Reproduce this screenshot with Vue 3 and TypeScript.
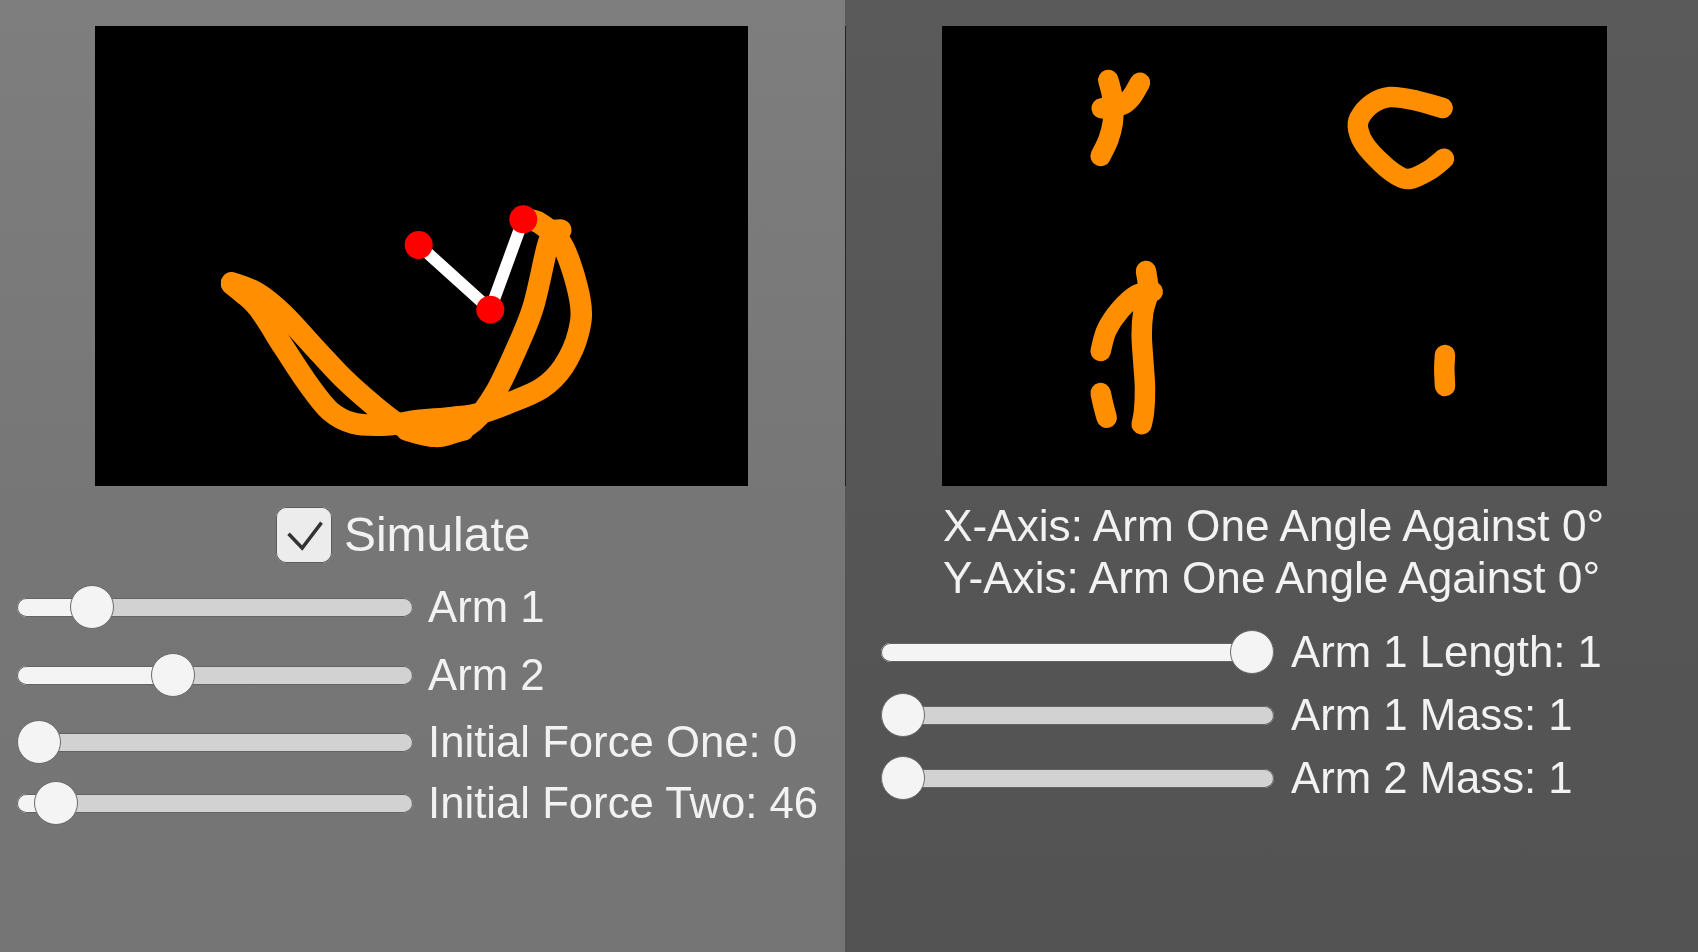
<script setup lang="ts">
type Pt = [number, number]
interface SliderRow { label: string; value: number; cls: string }

function smooth(pts: Pt[]): string {
  let d = `M${pts[0][0]} ${pts[0][1]}`
  for (let i = 0; i < pts.length - 1; i++) {
    const a = pts[Math.max(i - 1, 0)]
    const b = pts[i]
    const c = pts[i + 1]
    const e = pts[Math.min(i + 2, pts.length - 1)]
    const c1x = b[0] + (c[0] - a[0]) / 6
    const c1y = b[1] + (c[1] - a[1]) / 6
    const c2x = c[0] - (e[0] - b[0]) / 6
    const c2y = c[1] - (e[1] - b[1]) / 6
    d += ` C${c1x.toFixed(1)} ${c1y.toFixed(1)} ${c2x.toFixed(1)} ${c2y.toFixed(1)} ${c[0].toFixed(1)} ${c[1].toFixed(1)}`
  }
  return d
}

function trace(ox: number, oy: number, pts: Pt[]): string {
  return smooth(pts.map(([x, y]): Pt => [ox + x / 3, oy + y / 3]))
}

const leftTrace: string[] = [
  trace(200, 190, [
    [95, 278], [170, 308], [250, 372], [350, 480], [430, 565], [520, 645], [600, 705],
    [680, 735], [740, 735], [820, 695], [885, 610], [950, 475], [1000, 350],
    [1042, 170], [1062, 125],
  ]),
  trace(200, 190, [
    [95, 282], [172, 350], [250, 470], [325, 583], [390, 663], [460, 700],
    [560, 705], [650, 692], [760, 682], [840, 670], [925, 640], [1025, 595], [1090, 530],
    [1135, 430], [1140, 330], [1090, 170], [1020, 100], [970, 88],
  ]),
  trace(200, 190, [[1050, 122], [1082, 120]]),
  trace(200, 190, [[620, 720], [700, 738], [790, 720]]),
  trace(200, 190, [[95, 280], [135, 315]]),
]

const rightTrace: string[] = [
  trace(1080, 60, [[85, 60], [95, 100], [100, 140], [98, 190], [85, 240], [62, 288]]),
  trace(1080, 60, [[180, 68], [155, 110], [125, 135], [65, 145]]),
  trace(1340, 80, [
    [308, 84], [230, 62], [150, 51], [95, 72], [58, 115], [55, 150], [75, 195], [125, 250],
    [170, 285], [208, 297], [265, 272], [312, 236],
  ]),
  trace(1080, 255, [[198, 48], [205, 110], [190, 170], [185, 240], [190, 320], [195, 400], [192, 470], [185, 508]]),
  trace(1080, 255, [[62, 288], [80, 225], [120, 165], [170, 120], [218, 110]]),
  trace(1080, 255, [[62, 414], [70, 450], [80, 488]]),
  trace(1420, 340, [[75, 45], [73, 85], [75, 138]]),
]

const leftRows: SliderRow[] = [
  { label: 'Arm 1', value: 0.15, cls: 'first' },
  { label: 'Arm 2', value: 0.382, cls: 'arm' },
  { label: 'Initial Force One: 0', value: 0, cls: 'force-one' },
  { label: 'Initial Force Two: 46', value: 0.047, cls: 'force-two' },
]

const rightRows: SliderRow[] = [
  { label: 'Arm 1 Length: 1', value: 1, cls: 'first' },
  { label: 'Arm 1 Mass: 1', value: 0, cls: 'mass' },
  { label: 'Arm 2 Mass: 1', value: 0, cls: 'mass' },
]

const THUMB = 44
function thumbLeft(value: number, width: number): string {
  return `${(width - THUMB) * value}px`
}
function fillWidth(value: number, width: number): string {
  return `${(width - THUMB) * value + THUMB / 2}px`
}
</script>

<template>
  <div class="screen">
    <section class="panel left">
      <svg class="canvas left-canvas" viewBox="95 26 653 460">
        <rect x="95" y="26" width="653" height="460" fill="#000" />
        <path v-for="(d, i) in leftTrace" :key="i" :d="d" class="ink ink-left" />
        <path d="M418.7 245 L490.3 309.7 L523.3 219.3" class="arm-line" />
        <circle cx="418.7" cy="245" r="14" fill="#f00" />
        <circle cx="490.3" cy="309.7" r="14" fill="#f00" />
        <circle cx="523.3" cy="219.3" r="14" fill="#f00" />
      </svg>

      <div class="simulate">
        <span class="checkbox">
          <svg viewBox="0 0 55 55" width="56" height="56">
            <path d="M12.3 26.3 L25.7 40.3 L44.7 15.3" fill="none" stroke="#333" stroke-width="3.4" />
          </svg>
        </span>
        <span class="simulate-label">Simulate</span>
      </div>

      <div class="sliders">
        <div v-for="row in leftRows" :key="row.label" class="row" :class="row.cls">
          <div class="track track-left">
            <div class="fill" :style="{ width: fillWidth(row.value, 396) }"></div>
            <div class="thumb" :style="{ left: thumbLeft(row.value, 396) }"></div>
          </div>
          <span class="label">{{ row.label }}</span>
        </div>
      </div>
    </section>

    <section class="panel right">
      <span class="divider"></span>
      <svg class="canvas right-canvas" viewBox="942 26 665 460">
        <rect x="942" y="26" width="665" height="460" fill="#000" />
        <path v-for="(d, i) in rightTrace" :key="i" :d="d" class="ink ink-right" />
      </svg>

      <div class="axes">
        <div>X-Axis: Arm One Angle Against 0°</div>
        <div>Y-Axis: Arm One Angle Against 0°</div>
      </div>

      <div class="sliders">
        <div v-for="row in rightRows" :key="row.label" class="row" :class="row.cls">
          <div class="track track-right">
            <div class="fill" :style="{ width: fillWidth(row.value, 393) }"></div>
            <div class="thumb" :style="{ left: thumbLeft(row.value, 393) }"></div>
          </div>
          <span class="label">{{ row.label }}</span>
        </div>
      </div>
    </section>
  </div>
</template>

<style scoped>
.screen {
  display: flex;
  width: 1698px;
  height: 952px;
  overflow: hidden;
  font-family: "Liberation Sans", Arial, sans-serif;
  color: #f2f2f2;
}
.panel {
  position: relative;
  box-sizing: border-box;
  padding-top: 26px;
}
.left {
  width: 845px;
  background: linear-gradient(180deg, #7e7e7e 0%, #767676 55%, #757575 100%);
}
.right {
  flex: 1;
  background: linear-gradient(180deg, #5a5a5a 0%, #555555 60%, #535353 100%);
}
.divider {
  position: absolute;
  left: 0;
  top: 26px;
  width: 1px;
  height: 460px;
  background: #222;
}
.canvas {
  display: block;
  height: 460px;
}
.left-canvas {
  width: 653px;
  margin-left: 95px;
}
.right-canvas {
  width: 665px;
  margin-left: 97px;
}
.ink {
  fill: none;
  stroke: #ff8f00;
  stroke-linecap: round;
  stroke-linejoin: round;
}
.ink-left {
  stroke-width: 21.5;
}
.ink-right {
  stroke-width: 20.5;
}
.arm-line {
  fill: none;
  stroke: #fff;
  stroke-width: 12;
}
.simulate {
  display: flex;
  align-items: center;
  gap: 12px;
  margin: 21px 0 0 276px;
  height: 56px;
}
.checkbox {
  display: block;
  box-sizing: border-box;
  width: 56px;
  height: 56px;
  background: #ececec;
  box-shadow: inset 0 0 0 1px #5c5c5c;
  border-radius: 10px;
}
.checkbox svg {
  display: block;
}
.simulate-label {
  font-size: 47.9px;
  line-height: 56px;
  filter: blur(0.6px);
}
.sliders {
  display: flex;
  flex-direction: column;
}
.left .sliders {
  padding-left: 17px;
}
.right .sliders {
  padding-left: 36px;
}
.row {
  display: flex;
  align-items: center;
  height: 44px;
}
.left .row {
  gap: 15px;
}
.right .row {
  gap: 17px;
}
.left .first {
  margin-top: 22px;
}
.left .arm {
  margin-top: 24px;
}
.left .force-one {
  margin-top: 23px;
}
.left .force-two {
  margin-top: 17px;
}
.right .first {
  margin-top: 26px;
}
.right .mass {
  margin-top: 19px;
}
.track {
  position: relative;
  box-sizing: border-box;
  height: 19px;
  flex: none;
  background: #d2d2d2;
  box-shadow: inset 0 0 0 1px #636363;
  border-radius: 10px;
}
.track-left {
  width: 396px;
}
.track-right {
  width: 393px;
}
.fill {
  height: 100%;
  background: #f4f4f4;
  box-shadow: inset 0 0 0 1px #636363;
  border-radius: 10px;
}
.thumb {
  position: absolute;
  top: -12.5px;
  box-sizing: border-box;
  width: 44px;
  height: 44px;
  background: #f4f4f4;
  border: 1.5px solid #6a6a6a;
  border-radius: 50%;
}
.label {
  font-size: 43.7px;
  line-height: 43px;
  padding-bottom: 2px;
  white-space: nowrap;
  filter: blur(0.6px);
}
.axes {
  margin: 14px 0 0 98px;
  font-size: 44.2px;
  line-height: 52px;
  white-space: nowrap;
  filter: blur(0.6px);
}
</style>

<style>
html,
body {
  margin: 0;
  background: #666;
}
</style>
